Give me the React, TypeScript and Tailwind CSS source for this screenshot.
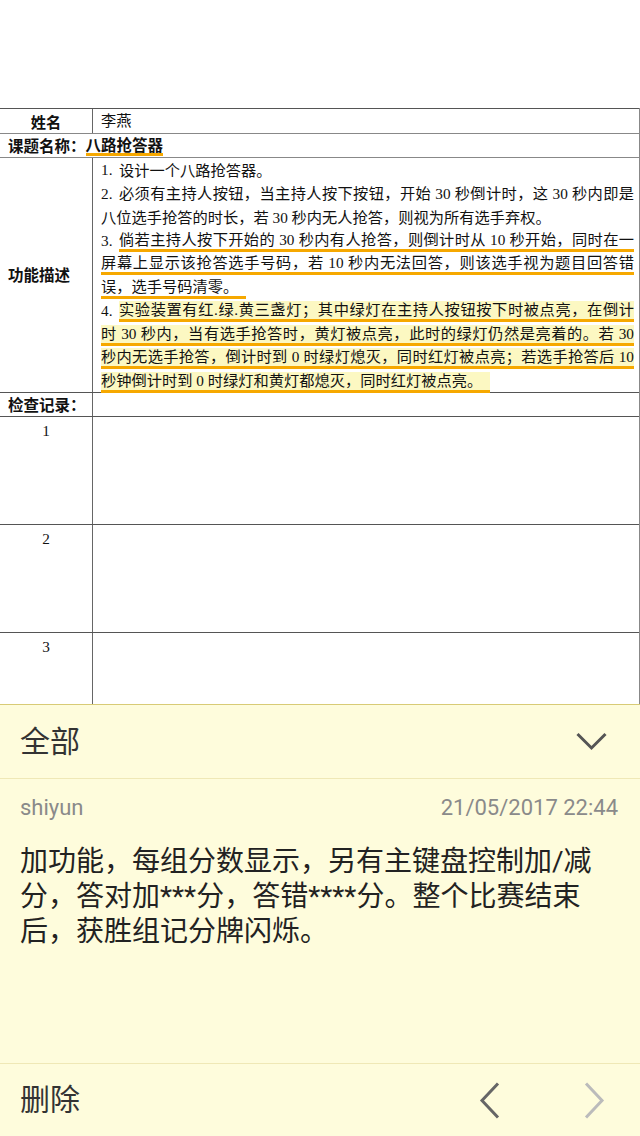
import type { ReactNode } from 'react';

const tableFont = { fontFamily: '"Liberation Serif", "Noto Sans CJK SC", serif' };
const labelFont = { fontFamily: '"Noto Sans CJK SC", sans-serif' };
const panelFont = { fontFamily: 'Roboto, "Noto Sans CJK SC", sans-serif' };

type LineProps = {
  num?: string;
  children: ReactNode;
  justify?: boolean;
  mark?: 'none' | 'underline' | 'highlight';
};

// one physical line of the description cell
function Line({ num, children, justify = false, mark = 'none' }: LineProps) {
  const markCls =
    mark === 'highlight'
      ? 'bg-[#fcf8c2] border-b-[3px] border-[#f6a800]'
      : mark === 'underline'
        ? 'border-b-[3px] border-[#f6a800]'
        : '';
  return (
    <div className="flex h-[23.5px] items-center whitespace-nowrap">
      {num && <span className="w-[18px] shrink-0">{num}</span>}
      <span
        className={`${justify ? 'flex-1 text-justify [text-align-last:justify]' : 'inline-block pr-2'} leading-[18px] ${markCls}`}
      >
        {children}
      </span>
    </div>
  );
}

function ChevronDown() {
  return (
    <svg width="31" height="19" viewBox="0 0 31 19" fill="none">
      <polyline points="1.5,2 15.5,16 29.5,2" stroke="#555" strokeWidth="3" />
    </svg>
  );
}

function ChevronSide({ dir, color }: { dir: 'left' | 'right'; color: string }) {
  return (
    <svg width="22" height="37" viewBox="0 0 22 37" fill="none">
      <polyline
        points={dir === 'left' ? '19,1.5 3,18.5 19,35.5' : '3,1.5 19,18.5 3,35.5'}
        stroke={color}
        strokeWidth="3"
      />
    </svg>
  );
}

export default function App() {
  return (
    <div className="w-[640px] h-[1136px] bg-white flex flex-col overflow-hidden text-[#111]">
      {/* blank top */}
      <div className="h-[108px] shrink-0" />

      {/* document table */}
      <div className="flex-1 overflow-hidden border-r border-[#888] text-[15.25px]" style={tableFont}>
        <div className="flex h-[25px] border-t border-[#555]">
          <div className="w-[93px] shrink-0 border-r border-[#666] flex items-center justify-center font-bold" style={labelFont}>
            姓名
          </div>
          <div className="flex-1 flex items-center pl-2">李燕</div>
        </div>

        <div className="flex h-[24px] border-t border-[#888] items-center pl-2 font-bold text-[15.5px]" style={labelFont}>
          课题名称：
          <span className="leading-[18px] border-b-[3px] border-[#f6a800]">八路抢答器</span>
        </div>

        <div className="flex h-[235px] border-t border-[#888]">
          <div className="w-[93px] shrink-0 border-r border-[#666] flex items-center pl-2 font-bold text-[15.5px]" style={labelFont}>
            功能描述
          </div>
          <div className="flex-1 pl-2 pr-[5px] pt-px">
            <Line num="1.">设计一个八路抢答器。</Line>
            <Line num="2." justify>
              必须有主持人按钮，当主持人按下按钮，开始 30 秒倒计时，这 30 秒内即是
            </Line>
            <Line>八位选手抢答的时长，若 30 秒内无人抢答，则视为所有选手弃权。</Line>
            <Line num="3." justify mark="underline">
              倘若主持人按下开始的 30 秒内有人抢答，则倒计时从 10 秒开始，同时在一
            </Line>
            <Line justify mark="underline">
              屏幕上显示该抢答选手号码，若 10 秒内无法回答，则该选手视为题目回答错
            </Line>
            <Line mark="underline">误，选手号码清零。</Line>
            <Line num="4." justify mark="highlight">
              实验装置有红.绿.黄三盏灯；其中绿灯在主持人按钮按下时被点亮，在倒计
            </Line>
            <Line justify mark="highlight">
              时 30 秒内，当有选手抢答时，黄灯被点亮，此时的绿灯仍然是亮着的。若 30
            </Line>
            <Line justify mark="highlight">
              秒内无选手抢答，倒计时到 0 时绿灯熄灭，同时红灯被点亮；若选手抢答后 10
            </Line>
            <Line mark="highlight">秒钟倒计时到 0 时绿灯和黄灯都熄灭，同时红灯被点亮。</Line>
          </div>
        </div>

        <div className="flex h-[24px] border-t border-[#555]">
          <div className="w-[93px] shrink-0 border-r border-[#666] flex items-center pl-2 font-bold text-[15.5px]" style={labelFont}>
            检查记录：
          </div>
          <div className="flex-1" />
        </div>

        {['1', '2', '3'].map((n) => (
          <div key={n} className="flex h-[108px] border-t border-[#555]">
            <div className="w-[93px] shrink-0 border-r border-[#666] flex justify-center pt-[5px] leading-[18px]">
              {n}
            </div>
            <div className="flex-1" />
          </div>
        ))}
      </div>

      {/* comment panel */}
      <div className="h-[432px] shrink-0 flex flex-col bg-[#fefcdc] border-t border-[#d8cb76]" style={panelFont}>
        <div className="h-[74px] shrink-0 flex items-center justify-between pl-5 pr-[33px] border-b border-[#efe8b6]">
          <span className="text-[30px] text-[#333] leading-none">全部</span>
          <ChevronDown />
        </div>

        <div className="flex-1 px-5 pt-[16px]">
          <div className="flex justify-between items-center text-[22px] text-[#8a8a8a] leading-[26px] pr-[2px]">
            <span>shiyun</span>
            <span>21/05/2017 22:44</span>
          </div>
          <p className="mt-[23px] text-[28px] leading-[35px] text-[#222] whitespace-nowrap">
            加功能，每组分数显示，另有主键盘控制加/减
            <br />
            分，答对加***分，答错****分。整个比赛结束
            <br />
            后，获胜组记分牌闪烁。
          </p>
        </div>

        <div className="h-[73px] shrink-0 flex items-center border-t border-[#efe8b6] pl-5 pr-[35px]">
          <span className="text-[30px] text-[#333] leading-none flex-1">删除</span>
          <div className="flex items-center gap-[82px]">
            <ChevronSide dir="left" color="#666" />
            <ChevronSide dir="right" color="#bbb" />
          </div>
        </div>
      </div>
    </div>
  );
}
